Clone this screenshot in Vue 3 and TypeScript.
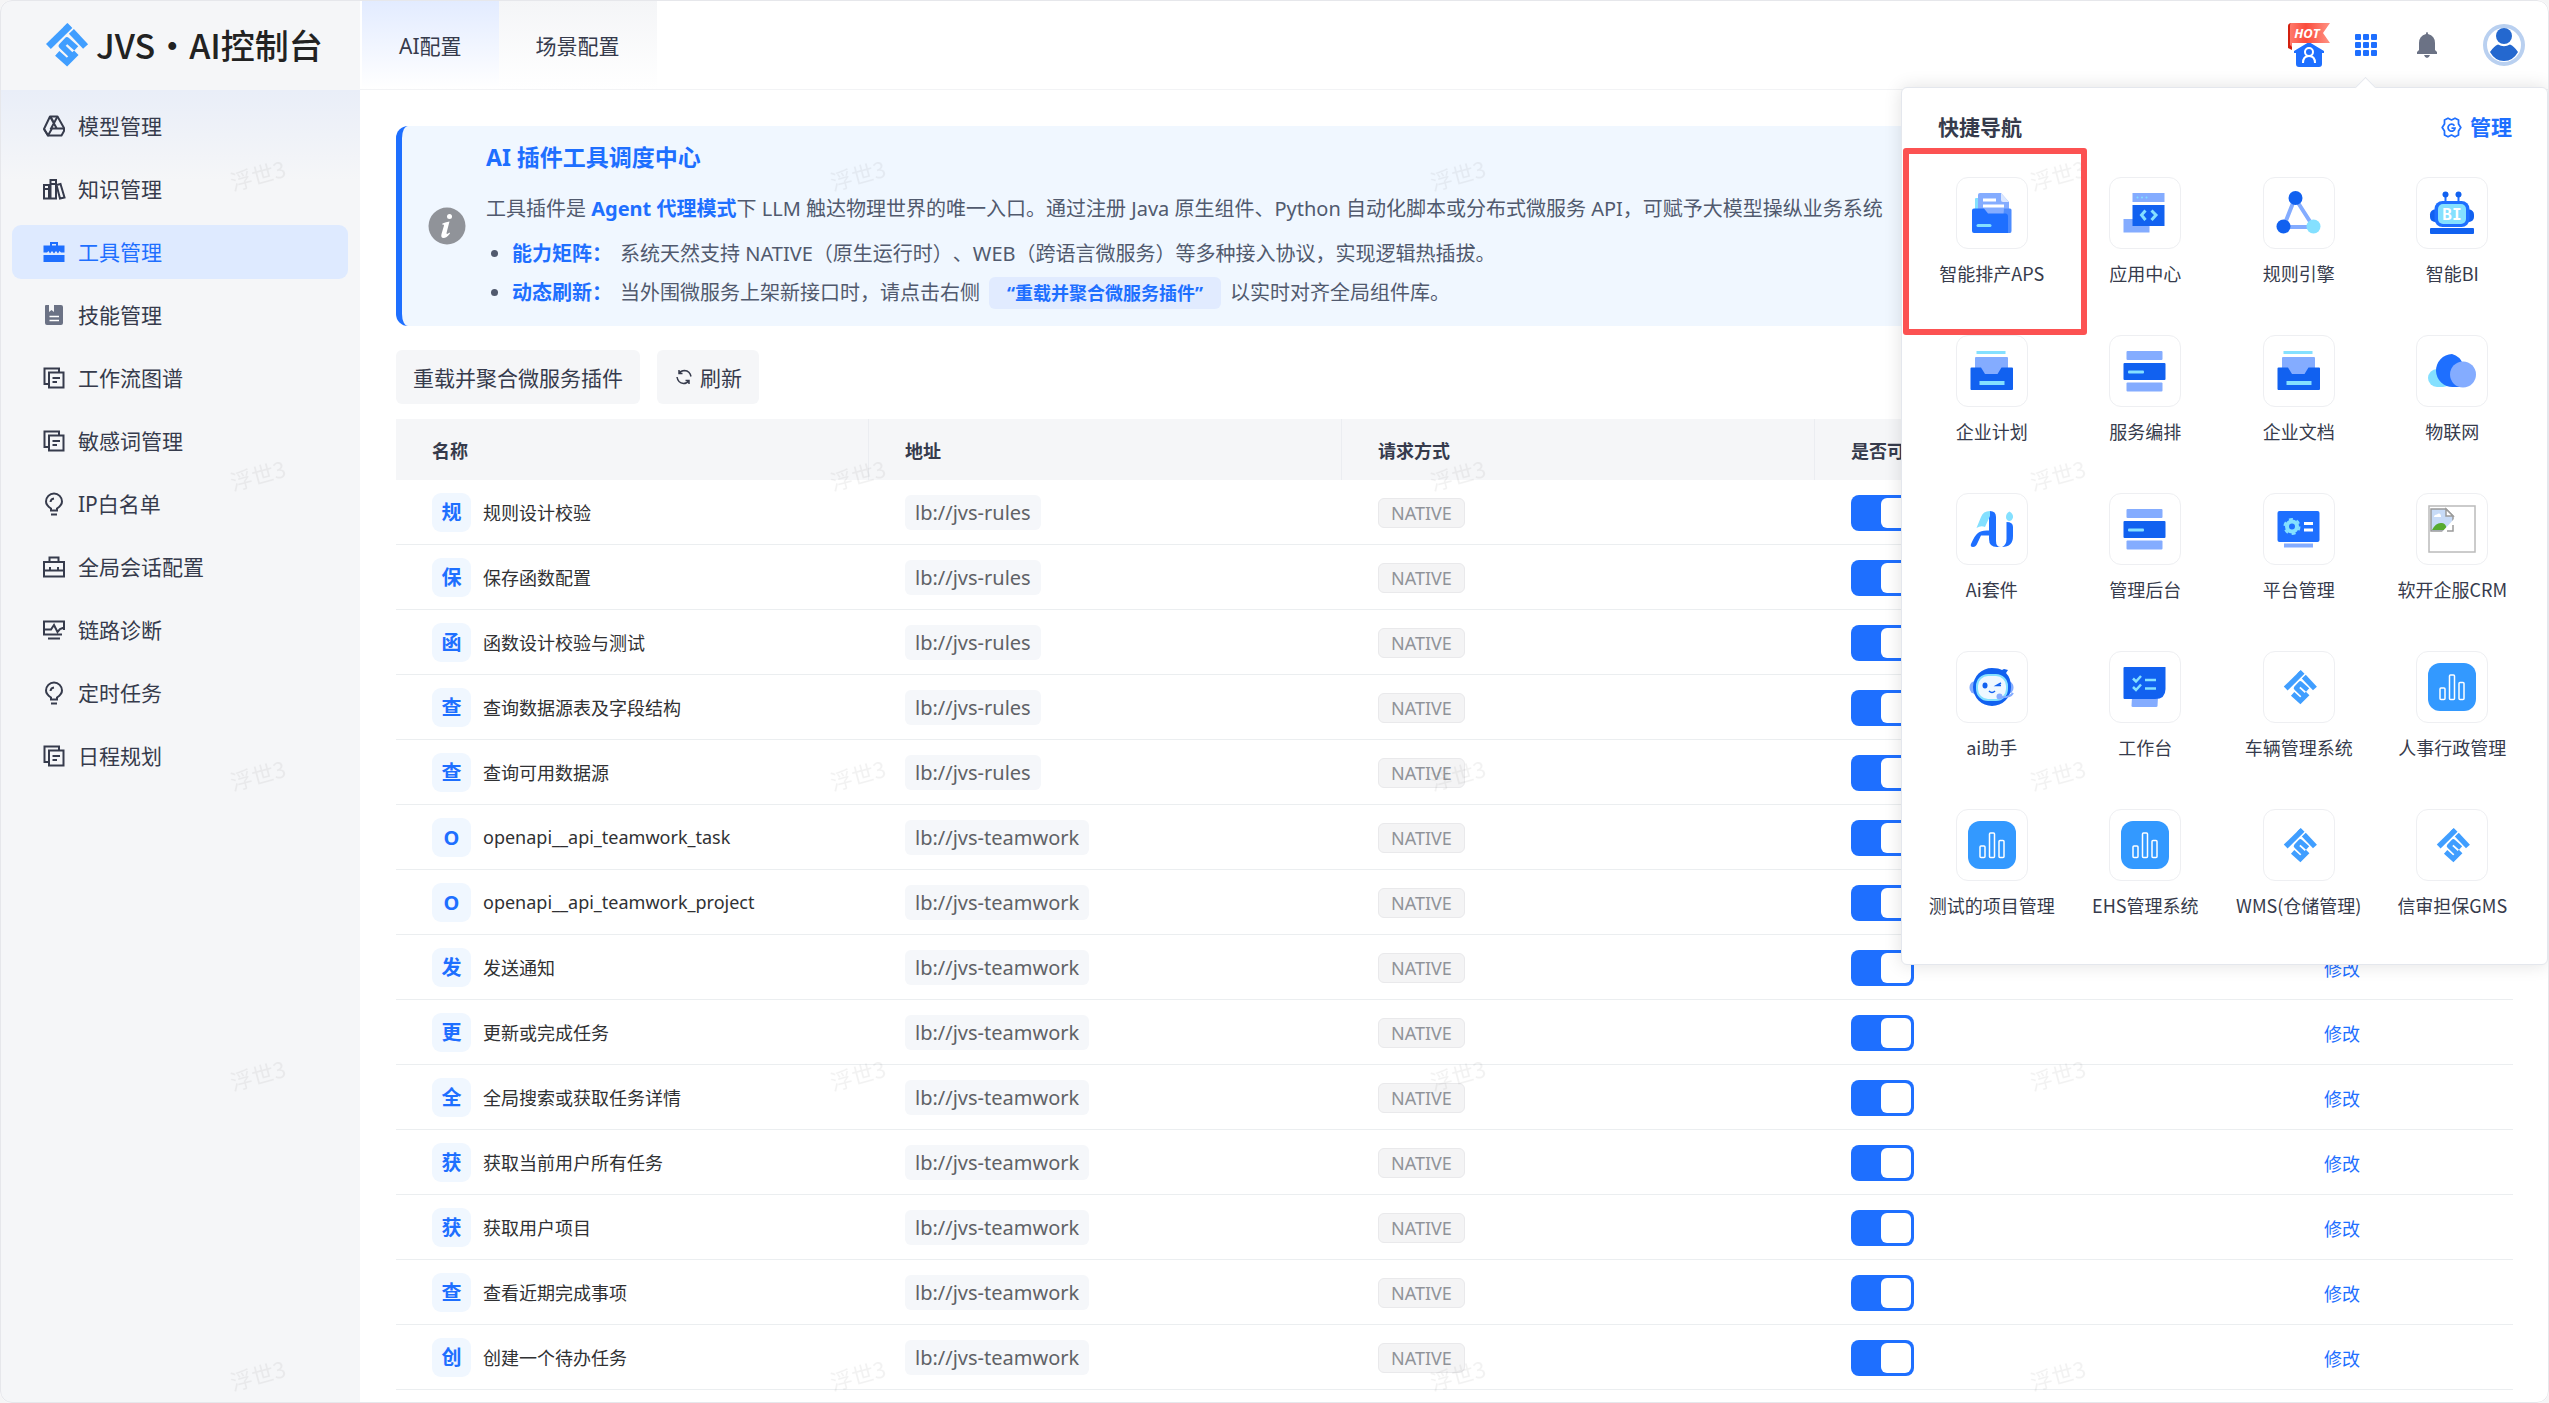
<script setup lang="ts">
import { ref } from 'vue'

interface MenuItem {
  label: string
  icon: string
}
interface ToolRow {
  name: string
  url: string
  enabled: boolean
}
interface QuickApp {
  label: string
  icon: string
  marked?: boolean
}

const logoMark =
  '<g fill="none" stroke="#409eff" stroke-width="7"><path d="M25.500 2.500 3.500 24"/><path d="M27 8.500 41.500 24"/><path d="M32 26 22.500 17.500 17 23.500 27.500 33.500" stroke-width="6" stroke-linejoin="round"/><path d="M12.500 31 22.500 40 32 30.500" stroke-width="6.500"/></g><path d="M22.500.5 27 4.500 23 7 18.500 4.500Z" fill="#409eff"/>'

const docs =
  '<g fill="none" stroke="currentColor" stroke-width="2"><path d="M7 18H2.500V2.500H17V6"/><path d="M7 6.500H21.500V21.500H7Z"/><path d="M10.500 12H18M10.500 16H15"/></g>'
const bulb =
  '<g fill="none" stroke="currentColor" stroke-width="2"><path d="M9 18.500V16.500C6 14.500 4 12.500 4 9.500A8 8 0 0 1 20 9.500C20 12.500 18 14.500 15 16.500V18.500Z"/><path d="M8.500 10A4 4 0 0 1 12 6.500M9 22.500H15"/></g>'

const menuIcons: Record<string, string> = {
  model:
    '<g fill="none" stroke="currentColor" stroke-width="2" stroke-linejoin="round"><path d="M8 2.500H15.500L22 14V17L19.500 21.500H6L2 15Z"/><path d="M8 2.500 14.500 14M15.500 2.500 8.500 15.500M2 15 6 21.500 10 14.500H22M8.500 2.500 11.500 8"/></g>',
  books:
    '<g fill="none" stroke="currentColor" stroke-width="2"><path d="M2 8H7V21.500H2ZM8.500 3H14V21.500H8.500ZM14.500 8 18.500 7 22.500 20.500 18 21.500ZM2 12H7M8.500 7H14"/></g>',
  toolbox:
    '<path d="M8 2H16V5.500H22.500V12.500H19L17.500 11 16 13.500 14 11 12 13.500 10 11 8 13.500 6.500 11 5 12.500H1.500V5.500H8ZM10 4V5.500H14V4ZM1.500 15H22.500V22H1.500Z" fill="currentColor" fill-rule="evenodd"/>',
  skill:
    '<path d="M4 2H7V9L9.500 7 12 9V2H19Q21 2 21 4V20Q21 22 19 22H5Q3 22 3 20V3Q3 2 4 2Z" fill="#6b7285"/><path d="M7.500 13.500H17M7.500 17.500H17" stroke="#fff" stroke-width="1.500"/>',
  docs,
  bulb,
  briefcase:
    '<g fill="none" stroke="currentColor" stroke-width="2"><path d="M2 7H22V21.500H2ZM7.500 7V2.500H16.500V7M2 15.500H22M8 12V15M16 12V15"/></g>',
  monitor:
    '<g fill="none" stroke="currentColor" stroke-width="2"><path d="M22 12V3.500H2V16.500H20M2 11.500H9L12 7 15.500 14 18 11 22 9.500M6 20.500H18"/></g>',
}

const menu: MenuItem[] = [
  { label: '模型管理', icon: 'model' },
  { label: '知识管理', icon: 'books' },
  { label: '工具管理', icon: 'toolbox' },
  { label: '技能管理', icon: 'skill' },
  { label: '工作流图谱', icon: 'docs' },
  { label: '敏感词管理', icon: 'docs' },
  { label: 'IP白名单', icon: 'bulb' },
  { label: '全局会话配置', icon: 'briefcase' },
  { label: '链路诊断', icon: 'monitor' },
  { label: '定时任务', icon: 'bulb' },
  { label: '日程规划', icon: 'docs' },
]
const activeMenu = ref('工具管理')

const rules = 'lb://jvs-rules'
const teamwork = 'lb://jvs-teamwork'
const rows = ref<ToolRow[]>([
  { name: '规则设计校验', url: rules, enabled: true },
  { name: '保存函数配置', url: rules, enabled: true },
  { name: '函数设计校验与测试', url: rules, enabled: true },
  { name: '查询数据源表及字段结构', url: rules, enabled: true },
  { name: '查询可用数据源', url: rules, enabled: true },
  { name: 'openapi__api_teamwork_task', url: teamwork, enabled: true },
  { name: 'openapi__api_teamwork_project', url: teamwork, enabled: true },
  { name: '发送通知', url: teamwork, enabled: true },
  { name: '更新或完成任务', url: teamwork, enabled: true },
  { name: '全局搜索或获取任务详情', url: teamwork, enabled: true },
  { name: '获取当前用户所有任务', url: teamwork, enabled: true },
  { name: '获取用户项目', url: teamwork, enabled: true },
  { name: '查看近期完成事项', url: teamwork, enabled: true },
  { name: '创建一个待办任务', url: teamwork, enabled: true },
])

const tray =
  '<rect x="8.500" y="4" width="29" height="3" fill="#84e0ff"/><rect x="7" y="10" width="33" height="18" rx="1" fill="#84acff"/><path d="M3.500 20.500H13L17 27H29.500L33.500 20.500H44Q45 20.500 45 21.500V42Q45 43 44 43H3.500Q2.500 43 2.500 42V21.500Q2.500 20.500 3.500 20.500Z" fill="#1161f0"/><rect x="11.500" y="34" width="25" height="4" fill="#84e0ff"/>'
const stack =
  '<rect x="5.500" y="4" width="36" height="9" rx="1" fill="#84acff"/><rect x="2.500" y="16" width="42" height="17" rx="1" fill="#1161f0"/><rect x="7" y="23.500" width="16" height="3" rx="1" fill="#84e0ff"/><rect x="5.500" y="35.500" width="36" height="9" rx="1" fill="#84acff"/>'
const chart =
  '<rect width="48" height="48" rx="12" fill="#3399ff"/><g fill="none" stroke="#fff" stroke-width="1.500"><rect x="12" y="25" width="5" height="11.500" rx="1"/><rect x="21.500" y="12" width="5" height="24.500" rx="1"/><rect x="31" y="19.500" width="5" height="17" rx="1"/></g>'
const brand = `<g transform="translate(8 7) scale(.77)">${logoMark}</g>`

const appIcons: Record<string, string> = {
  folder:
    '<rect x="7" y="9" width="12" height="16" rx="1" fill="#84e0ff"/><path d="M12 4H33L41 13V38H10V6Q10 4 12 4Z" fill="#84acff"/><path d="M33 4V11Q33 13 35 13H41Z" fill="#dbe7ff"/><path d="M15 11H28M15 17H36" stroke="#fff" stroke-width="3"/><path d="M36 19.500H42Q43.500 19.500 43.500 21V42Q43.500 44 42 44H34Z" fill="#4d8cff"/><path d="M6 19.500H16L20 24.500H38Q40 25 40 27V44H6Q4 44 4 42V21.500Q4 19.500 6 19.500Z" fill="#1e6fff"/><path d="M10 36.500H22" stroke="#84e0ff" stroke-width="3" stroke-linecap="round"/>',
  code:
    '<rect x="2.500" y="30" width="26" height="13.500" fill="#84acff"/><rect x="11.500" y="4" width="32" height="9" fill="#84acff"/><g fill="#84e0ff"><circle cx="16.500" cy="8.500" r="1"/><circle cx="21" cy="8.500" r="1"/><circle cx="25.500" cy="8.500" r="1"/></g><rect x="11.500" y="16" width="32" height="21" fill="#1161f0"/><path d="M24.500 21.500 20.500 26 24.500 31M30.500 21.500 35 26 30.500 31" fill="none" stroke="#84e0ff" stroke-width="3"/>',
  triangle:
    '<path d="M20 9 8.500 38H38.500Z" fill="none" stroke="#84acff" stroke-width="4"/><circle cx="20.500" cy="9" r="7" fill="#1161f0"/><circle cx="8.500" cy="37.500" r="7" fill="#1161f0"/><circle cx="38.500" cy="37.500" r="7" fill="#84e0ff"/>',
  bi:
    '<path d="M17.500 5V13M30.500 5V13" stroke="#1e6fff" stroke-width="2"/><circle cx="17.500" cy="5.500" r="3" fill="#1161f0"/><circle cx="30.500" cy="5.500" r="3" fill="#1161f0"/><rect x="2" y="20.500" width="44" height="12.500" rx="5" fill="#1161f0"/><rect x="6.500" y="12" width="35" height="26" rx="8" fill="#1e6fff"/><rect x="10" y="15" width="28" height="20" rx="5" fill="#84e0ff"/><text x="24" y="31" text-anchor="middle" font-family="DejaVu Sans Mono, monospace" font-weight="700" font-size="16" fill="#fff">BI</text><rect x="2" y="39" width="44" height="6" rx="1" fill="#1161f0"/>',
  tray,
  stack,
  cloud:
    '<rect x="0" y="22" width="24" height="18" rx="9" fill="#84e0ff"/><path d="M24 7A16.500 16.500 0 1 0 25 40H35V17A16.500 16.500 0 0 0 24 7Z" fill="#1e6fff"/><circle cx="35" cy="27.500" r="13" fill="#84acff"/>',
  ai:
    '<path d="M22 6Q28 6 28 12V36Q28 42 33 42H29Q21 42 21 34V12Q21 8 22 6Z" fill="#1e6fff"/><path d="M22 6Q15 6 13 12L8.500 23Q13 20 17 22L22 11Z" fill="#84e0ff"/><path d="M21 25.500Q13 25 10 28Q7 30 3 39Q2 42 5 42Q8 42 9.500 38L13 30.500H21Z" fill="#1e6fff"/><path d="M38.500 17Q45 17 45 22V31Q45 42 34 42Q38.500 40 38.500 34Z" fill="#1e6fff"/><path d="M41.500 6.500Q45.500 9 45 12.500Q44 16 41 16Q38 15 38 12Q38 8 41.500 6.500Z" fill="#84e0ff"/>',
  platform:
    '<rect x="2.500" y="6" width="42" height="31" rx="2" fill="#1e6fff"/><circle cx="17" cy="21.500" r="5" fill="none" stroke="#84e0ff" stroke-width="4"/><circle cx="17" cy="21.500" r="7.500" fill="none" stroke="#84e0ff" stroke-width="2" stroke-dasharray="4 4"/><path d="M29 18.500H38M29 25H38" stroke="#fff" stroke-width="3"/><rect x="9" y="38.500" width="29" height="4" fill="#84acff"/>',
  broken:
    '<rect x="1" y="1" width="46" height="46" fill="none" stroke="#bbb" stroke-width="1.500"/><path d="M3 4H18L25 11V26H3Z" fill="#c7dbf7" stroke="#9a9a9a" stroke-width="1.500"/><path d="M18 4V11H25Z" fill="#fff" stroke="#9a9a9a" stroke-width="1.500"/><path d="M6 12Q6 9.500 9 9.500Q12 7 13 11V12Z" fill="#fff"/><path d="M4 25Q8 17 14 18Q18 18 19 25Z" fill="#56ab2f"/><path d="M26 14 13 28H26Z" fill="#fff"/><path d="M25 20V26H19" fill="none" stroke="#9a9a9a" stroke-width="1.500"/>',
  helper:
    '<rect x="1.500" y="18" width="44" height="13" rx="6" fill="#84acff"/><path d="M36 6 40 7 38 10Q43 15 43 24A19 19 0 0 1 5 24A19 19 0 0 1 24 5Q31 5 34 7Z" fill="#1161f0"/><rect x="9" y="12" width="30" height="25" rx="11" fill="#eef8ff" stroke="#84e0ff" stroke-width="2"/><ellipse cx="17" cy="22.500" rx="2.500" ry="3" fill="#1161f0"/><path d="M33 20 28.500 22.500H33M21 28Q24 31 27 28" fill="none" stroke="#1161f0" stroke-width="1.500"/><path d="M45 30Q42 35 32 34" fill="none" stroke="#84acff" stroke-width="2"/><circle cx="31.500" cy="33.500" r="3" fill="#84acff"/>',
  desk:
    '<path d="M11 34H37L36.500 43Q36.500 44 35 44H12Q10.500 44 10.500 43Z" fill="#84acff"/><path d="M3.500 4H44.500V26Q44.500 36 34 36H3.500Q2.500 36 2.500 35V5Q2.500 4 3.500 4Z" fill="#1161f0"/><path d="M12 15.500 15 18.500 20 13M24 17H35M12 24 15 27 20 21.500M24 25.500H35" fill="none" stroke="#84e0ff" stroke-width="2.500"/>',
  brand,
  chart,
}

const apps: QuickApp[] = [
  { label: '智能排产APS', icon: 'folder', marked: true },
  { label: '应用中心', icon: 'code' },
  { label: '规则引擎', icon: 'triangle' },
  { label: '智能BI', icon: 'bi' },
  { label: '企业计划', icon: 'tray' },
  { label: '服务编排', icon: 'stack' },
  { label: '企业文档', icon: 'tray' },
  { label: '物联网', icon: 'cloud' },
  { label: 'Ai套件', icon: 'ai' },
  { label: '管理后台', icon: 'stack' },
  { label: '平台管理', icon: 'platform' },
  { label: '软开企服CRM', icon: 'broken' },
  { label: 'ai助手', icon: 'helper' },
  { label: '工作台', icon: 'desk' },
  { label: '车辆管理系统', icon: 'brand' },
  { label: '人事行政管理', icon: 'chart' },
  { label: '测试的项目管理', icon: 'chart' },
  { label: 'EHS管理系统', icon: 'chart' },
  { label: 'WMS(仓储管理)', icon: 'brand' },
  { label: '信审担保GMS', icon: 'brand' },
]
</script>

<template>
  <div class="app">
    <aside class="sidebar">
      <div class="brand">
        <svg class="brand-mark" viewBox="0 0 45 45" aria-hidden="true" v-html="logoMark"></svg>
        <h1 class="brand-name">JVS·AI控制台</h1>
      </div>
      <nav class="menu" aria-label="主菜单">
        <a
          v-for="item in menu"
          :key="item.label"
          href="#"
          class="menu-item"
          :class="{ active: item.label === activeMenu }"
          @click.prevent="activeMenu = item.label"
        >
          <svg class="menu-icon" viewBox="0 0 24 24" aria-hidden="true" v-html="menuIcons[item.icon]"></svg>
          <span>{{ item.label }}</span>
        </a>
      </nav>
    </aside>

    <div class="content">
      <header class="topbar">
        <nav class="tabs" aria-label="配置">
          <a href="#" class="tab current">AI配置</a>
          <a href="#" class="tab">场景配置</a>
        </nav>
        <div class="actions">
          <button type="button" class="action hot" aria-label="门户">
            <svg viewBox="0 0 42 44" width="42" height="44">
              <defs>
                <linearGradient id="flag" x1="0" x2="1">
                  <stop offset="0" stop-color="#ff7a6b" />
                  <stop offset="0.4" stop-color="#fa4b3c" />
                  <stop offset="1" stop-color="#ff9384" />
                </linearGradient>
              </defs>
              <path d="M0 3Q0 0 4 0V27L0 25Z" fill="#d2200f" />
              <path d="M21 19 36 28V30H34V41Q34 44 31 44H11Q8 44 8 41V30H6V28Z" fill="#1e6fff" />
              <circle cx="21" cy="29" r="4" fill="none" stroke="#fff" stroke-width="2" />
              <path d="M15 40Q15 33 21 33Q27 33 27 40" fill="none" stroke="#fff" stroke-width="2" />
              <path d="M3 0H42L35 10 42 20H4V24L2 22V3Q2 0 3 0Z" fill="url(#flag)" />
              <text x="19" y="15" text-anchor="middle" font-family="Open Sans, sans-serif" font-size="13" font-weight="700" font-style="italic" fill="#fff">HOT</text>
            </svg>
          </button>
          <button type="button" class="action apps-toggle" aria-label="快捷导航" aria-expanded="true">
            <svg viewBox="0 0 22 22" width="22" height="22" fill="#1e6fff">
              <rect width="6" height="6" rx="1" /><rect x="8" width="6" height="6" rx="1" /><rect x="16" width="6" height="6" rx="1" />
              <rect y="8" width="6" height="6" rx="1" /><rect x="8" y="8" width="6" height="6" rx="1" /><rect x="16" y="8" width="6" height="6" rx="1" />
              <rect y="16" width="6" height="6" rx="1" /><rect x="8" y="16" width="6" height="6" rx="1" /><rect x="16" y="16" width="6" height="6" rx="1" />
            </svg>
          </button>
          <button type="button" class="action bell" aria-label="通知">
            <svg viewBox="0 0 22 26" width="22" height="26" fill="#6b7285">
              <path d="M10 2Q10 0 11 0T12 2Q19 4 19 11V18L21 20V22H1V20L3 18V11Q3 4 10 2ZM8 23H14Q13 26 11 26T8 23Z" />
            </svg>
          </button>
          <button type="button" class="action avatar" aria-label="用户">
            <svg viewBox="0 0 42 42" width="42" height="42">
              <circle cx="21" cy="21" r="19" fill="#fff" stroke="#b9d0f0" stroke-width="4" />
              <circle cx="21" cy="12" r="8" fill="#2468cf" />
              <path d="M7 28Q11 22 15 20.500Q21 24 27 20.500Q31 22 35 28Q30 37 21 37T7 28Z" fill="#2468cf" />
            </svg>
          </button>
        </div>
      </header>

      <main class="main">
        <section class="notice">
          <svg class="notice-icon" viewBox="0 0 38 38" aria-hidden="true">
            <circle cx="19" cy="19" r="18.500" fill="#909399" />
            <circle cx="21.500" cy="9.500" r="2.500" fill="#fff" />
            <path d="M14.500 16.500Q18 15 21.500 14.500L18.500 26Q18.500 28 21.500 25.500L22 26.500Q18.500 31 15.500 31Q12.500 31 13.500 27L16 18.500Q16 17 14 17.500Z" fill="#fff" />
          </svg>
          <div class="notice-body">
            <h2>AI 插件工具调度中心</h2>
            <p>工具插件是 <strong>Agent 代理模式</strong>下 LLM 触达物理世界的唯一入口。通过注册 Java 原生组件、Python 自动化脚本或分布式微服务 API，可赋予大模型操纵业务系统</p>
            <ul>
              <li><strong>能力矩阵：</strong><span>系统天然支持 NATIVE（原生运行时）、WEB（跨语言微服务）等多种接入协议，实现逻辑热插拔。</span></li>
              <li><strong>动态刷新：</strong><span>当外围微服务上架新接口时，请点击右侧</span><em>“重载并聚合微服务插件”</em><span>以实时对齐全局组件库。</span></li>
            </ul>
          </div>
        </section>

        <div class="toolbar">
          <button type="button" class="btn">重载并聚合微服务插件</button>
          <button type="button" class="btn">
            <svg viewBox="0 0 20 20" width="20" height="20" fill="none" stroke="currentColor" stroke-width="1.500" aria-hidden="true">
              <path d="M5 3V6.500H8.500M5 6.500Q7 3.500 10.500 3.500Q16 4 17 9.500M15 17V13.500H11.500M15 13.500Q13 16.500 9.500 16.500Q4 16 3 10" />
            </svg>
            刷新
          </button>
        </div>

        <table class="tools">
          <colgroup>
            <col /><col /><col /><col /><col class="col-action" />
          </colgroup>
          <thead>
            <tr>
              <th scope="col">名称</th>
              <th scope="col">地址</th>
              <th scope="col">请求方式</th>
              <th scope="col">是否可用</th>
              <th scope="col">操作</th>
            </tr>
          </thead>
          <tbody>
            <tr v-for="row in rows" :key="row.name">
              <td>
                <div class="name">
                  <span class="initial">{{ row.name.charAt(0).toUpperCase() }}</span>
                  <span>{{ row.name }}</span>
                </div>
              </td>
              <td><span class="url">{{ row.url }}</span></td>
              <td><span class="tag">NATIVE</span></td>
              <td><input v-model="row.enabled" type="checkbox" class="switch" :aria-label="`启用${row.name}`" /></td>
              <td><a href="#" class="edit">修改</a></td>
            </tr>
          </tbody>
        </table>
      </main>
    </div>

    <section class="popover" aria-label="快捷导航">
      <div class="popover-head">
        <h2>快捷导航</h2>
        <a href="#" class="manage">
          <svg viewBox="1 1 18 18" width="21" height="21" fill="none" stroke="currentColor" stroke-width="1.500" aria-hidden="true">
            <path d="M7 2 10 3.500 13 2 16 3.500V7L18 10 16 13V16.500L13 18 10 16.500 7 18 4 16.500V13L2 10 4 7V3.500Z" stroke-linejoin="round" />
            <path d="M12.500 8.500A3 3 0 1 0 13 10.500H10" />
          </svg>
          管理
        </a>
      </div>
      <ul class="apps">
        <li v-for="app in apps" :key="app.label" :class="{ marked: app.marked }">
          <a href="#" class="app-link">
            <span class="tile"><svg viewBox="0 0 48 48" width="48" height="48" aria-hidden="true" v-html="appIcons[app.icon]"></svg></span>
            <span class="app-name">{{ app.label }}</span>
          </a>
        </li>
      </ul>
    </section>

    <svg class="watermark" aria-hidden="true">
      <defs>
        <pattern id="mark" width="600" height="300" patternUnits="userSpaceOnUse">
          <text x="258" y="184" text-anchor="middle" transform="rotate(-15 258 176)">浮世3</text>
        </pattern>
      </defs>
      <rect width="100%" height="100%" fill="url(#mark)" />
    </svg>
  </div>
</template>

<style>
body {
  margin: 0;
  background: #f5f5f6;
}
</style>

<style scoped>
* {
  box-sizing: border-box;
}
.app {
  position: relative;
  display: flex;
  min-height: 100vh;
  overflow: hidden;
  border-radius: 12px;
  background: #fff;
  color: #363b4c;
  font-family: "Noto Sans", "Noto Sans CJK SC", sans-serif;
  font-size: 21px;
  text-spacing-trim: space-all;
}
.app::after {
  content: "";
  position: absolute;
  inset: 0;
  border: 1px solid #e6e7eb;
  border-radius: 12px;
  pointer-events: none;
}
a {
  color: inherit;
  text-decoration: none;
}
h1,
h2,
p,
ul {
  margin: 0;
  padding: 0;
}
button {
  border: 0;
  padding: 0;
  background: none;
  color: inherit;
  font: inherit;
  cursor: pointer;
}

.sidebar {
  flex: 0 0 360px;
  background: #f5f6f8;
}
.brand {
  display: flex;
  align-items: center;
  gap: 7px;
  height: 90px;
  padding-left: 45px;
}
.brand-mark {
  width: 44px;
  height: 44px;
}
.brand-name {
  color: #222;
  font-family: "Noto Sans CJK SC", sans-serif;
  font-size: 34px;
  font-weight: 500;
  line-height: 48px;
  white-space: nowrap;
}
.menu {
  display: flex;
  flex-direction: column;
  gap: 9px;
  padding: 9px 12px;
  background: linear-gradient(#e9eef8, #f5f6f8 90px);
}
.menu-item {
  display: flex;
  align-items: center;
  gap: 12px;
  height: 54px;
  padding-left: 30px;
  border-radius: 9px;
  line-height: 30px;
}
.menu-item.active {
  background: #deeaff;
  color: #1e6fff;
}
.menu-icon {
  width: 24px;
  height: 24px;
}

.content {
  flex: 1;
  min-width: 0;
}
.topbar {
  display: flex;
  justify-content: space-between;
  height: 90px;
  padding: 0 24px 0 2px;
  border-bottom: 1px solid #f2f3f5;
}
.tabs {
  display: flex;
}
.tab {
  padding: 0 37px;
  background: linear-gradient(#f4f5f7, #fff);
  line-height: 92px;
}
.tab.current {
  background: linear-gradient(#e2ebff, #fff);
}
.actions {
  display: flex;
  align-items: center;
  gap: 18px;
}
.action {
  display: flex;
  align-items: center;
  justify-content: center;
  height: 48px;
}
.hot {
  width: 42px;
}
.apps-toggle {
  width: 36px;
}
.bell {
  width: 50px;
}
.avatar {
  width: 42px;
  margin-left: 13px;
}

.main {
  padding: 36px 36px 12px;
}
.notice {
  display: flex;
  align-items: center;
  gap: 20px;
  height: 200px;
  padding-left: 26px;
  border-left: 6px solid #1e6fff;
  border-radius: 12px;
  background: #f0f7ff;
  color: #515a6e;
  font-size: 20px;
  overflow: hidden;
}
.notice-icon {
  flex: none;
  width: 38px;
  height: 38px;
}
.notice-body {
  padding-bottom: 2px;
  white-space: nowrap;
}
.notice h2 {
  margin-bottom: 12px;
  color: #1e6fff;
  font-size: 23px;
  line-height: 39px;
}
.notice p {
  margin-bottom: 6px;
  line-height: 39px;
}
.notice strong {
  color: #1e6fff;
}
.notice ul {
  padding-left: 26px;
}
.notice li {
  line-height: 39px;
}
.notice li strong {
  margin-right: 8px;
}
.notice em {
  margin: 0 9px;
  padding: 4px 18px;
  border-radius: 6px;
  background: #e1ebff;
  color: #1e6fff;
  font-size: 18px;
  font-style: normal;
  font-weight: 700;
}

.toolbar {
  display: flex;
  gap: 17px;
  margin: 24px 0 15px;
}
.btn {
  display: flex;
  align-items: center;
  gap: 6px;
  height: 54px;
  padding: 0 17px;
  border-radius: 6px;
  background: #f5f6f8;
}

.tools {
  width: 100%;
  table-layout: fixed;
  border-collapse: separate;
  border-spacing: 0;
  font-size: 18px;
}
.col-action {
  width: 225px;
}
.tools th {
  height: 61px;
  padding: 0 36px;
  border-right: 1px solid #ebedf1;
  background: #f5f6f8;
  text-align: left;
}
.tools th:last-child {
  border-right: 0;
}
.tools td {
  height: 65px;
  padding: 0 36px;
  border-bottom: 1px solid #ebeef0;
  color: #303133;
}
.tools td:nth-child(n + 3) {
  padding-top: 2px;
}
.name {
  display: flex;
  align-items: center;
  gap: 12px;
}
.initial {
  width: 39px;
  border-radius: 9px;
  background: #f0f7ff;
  color: #1e6fff;
  font-size: 20px;
  font-weight: 700;
  line-height: 39px;
  text-align: center;
}
.url {
  display: inline-block;
  padding: 0 10px;
  border-radius: 6px;
  background: #f5f7fa;
  color: #606266;
  font-size: 20px;
  line-height: 35px;
}
.tag {
  display: inline-block;
  padding: 0 12px;
  border: 1px solid #e9e9eb;
  border-radius: 6px;
  background: #f4f4f5;
  color: #909399;
  line-height: 28px;
}
.switch {
  display: block;
  appearance: none;
  width: 63px;
  height: 36px;
  margin: 0;
  padding: 3px;
  border-radius: 8px;
  background: #c0c4cc;
}
.switch::before {
  content: "";
  display: block;
  width: 30px;
  height: 30px;
  border-radius: 6px;
  background: #fff;
}
.switch:checked {
  background: #1e6fff;
}
.switch:checked::before {
  margin-left: auto;
}
.edit {
  color: #1e6fff;
}

.popover {
  position: absolute;
  top: 87px;
  right: 1px;
  width: 647px;
  padding: 24px 18px 27px 13px;
  border: 1px solid #e4e7ed;
  border-radius: 6px;
  background: #fff;
  box-shadow: 0 0 18px rgba(0, 0, 0, 0.12);
}
.popover::before {
  content: "";
  position: absolute;
  top: -8px;
  right: 174px;
  width: 14px;
  height: 14px;
  border: 1px solid #e4e7ed;
  border-right: 0;
  border-bottom: 0;
  background: #fff;
  transform: rotate(45deg);
}
.popover-head {
  display: flex;
  align-items: center;
  justify-content: space-between;
  height: 30px;
  padding: 0 17px 0 23px;
}
.popover-head h2 {
  font-size: 21px;
  line-height: 30px;
}
.manage {
  display: flex;
  align-items: center;
  gap: 8px;
  color: #1e6fff;
  font-weight: 700;
  line-height: 30px;
}
.apps {
  display: grid;
  grid-template-columns: repeat(4, 1fr);
  margin-top: 5px;
  list-style: none;
}
.apps li {
  position: relative;
  height: 158px;
  padding-top: 30px;
}
.app-link {
  display: flex;
  flex-direction: column;
  align-items: center;
  gap: 11px;
}
.tile {
  display: flex;
  align-items: center;
  justify-content: center;
  width: 72px;
  height: 72px;
  border: 1px solid #eeeff2;
  border-radius: 12px;
}
.app-name {
  font-family: "Noto Sans CJK SC", sans-serif;
  font-size: 18px;
  line-height: 27px;
  white-space: nowrap;
}
.marked::after {
  content: "";
  position: absolute;
  z-index: 3;
  inset: 1px -18px -30px -12px;
  border: 6px solid #fc5252;
  border-radius: 3px;
}
.watermark {
  position: absolute;
  z-index: 2;
  inset: 0;
  width: 100%;
  height: 100%;
  pointer-events: none;
  font-family: "Noto Sans CJK SC", sans-serif;
  font-size: 22px;
  fill: rgba(0, 0, 0, 0.05);
}
</style>
